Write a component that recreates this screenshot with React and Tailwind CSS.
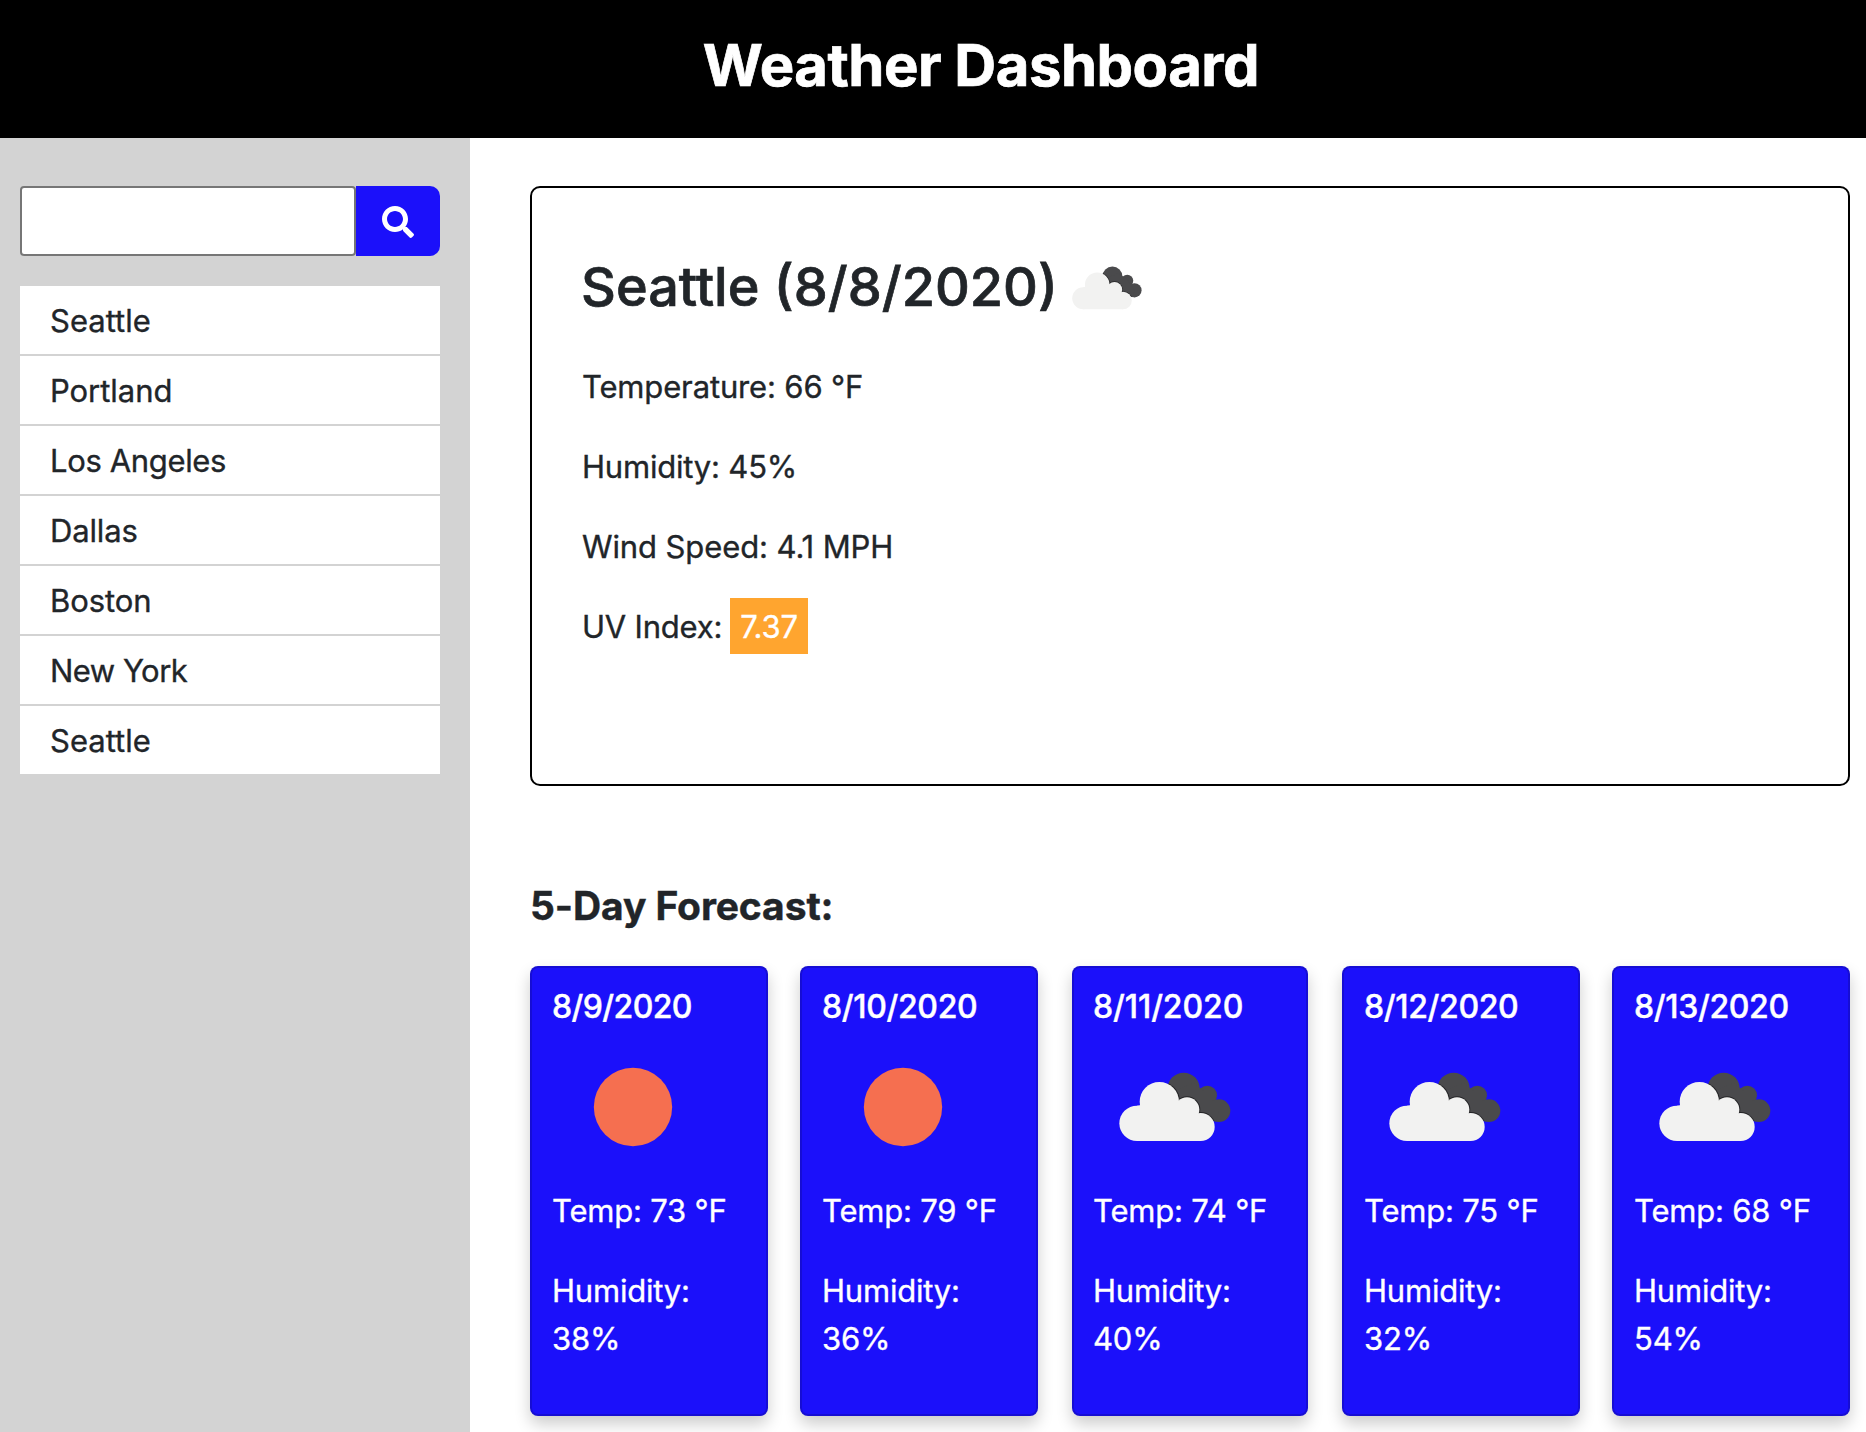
import { useId } from "react";
import { FaSearch } from "react-icons/fa";

const cities = [
  { name: "Seattle", tracking: "tracking-[0px]" },
  { name: "Portland", tracking: "tracking-[-0.05px]" },
  { name: "Los Angeles", tracking: "tracking-[-0.35px]" },
  { name: "Dallas", tracking: "tracking-[-0.15px]" },
  { name: "Boston", tracking: "tracking-[-0.1px]" },
  { name: "New York", tracking: "tracking-[-0.5px]" },
  { name: "Seattle", tracking: "tracking-[0px]" },
];

const forecast = [
  { date: "8/9/2020", icon: "clear", temp: 73, humidity: 38, tracking: "tracking-[-0.6px]" },
  { date: "8/10/2020", icon: "clear", temp: 79, humidity: 36, tracking: "tracking-[-0.35px]" },
  { date: "8/11/2020", icon: "clouds", temp: 74, humidity: 40, tracking: "tracking-[-0.1px]" },
  { date: "8/12/2020", icon: "clouds", temp: 75, humidity: 32, tracking: "tracking-[-0.35px]" },
  { date: "8/13/2020", icon: "clouds", temp: 68, humidity: 54, tracking: "tracking-[-0.35px]" },
];

function Puffs() {
  return (
    <>
      <circle cx="81" cy="190" r="53" />
      <circle cx="148" cy="125" r="59" />
      <circle cx="231" cy="149" r="37" />
      <circle cx="272" cy="201" r="42" />
      <path d="M81 243V137L148 125L231 149L272 201V243Z" />
    </>
  );
}

function DarkPuffs() {
  return (
    <>
      <circle cx="221" cy="86" r="48" />
      <circle cx="292" cy="106" r="29" />
      <circle cx="327" cy="152" r="34" />
      <path d="M200 90L250 70L292 100L327 152L318 185L290 175L231 149Z" />
    </>
  );
}

function WeatherIcon({ name, className }) {
  const id = useId();
  return (
    <svg className={className} viewBox="-45 -99 480 480" aria-hidden="true">
      {name === "clear" ? (
        <circle cx="195" cy="141" r="117.5" fill="#f56f50" />
      ) : (
        <>
          <clipPath id={id}>
            <DarkPuffs />
          </clipPath>
          <g fill="#4a4a4c">
            <DarkPuffs />
          </g>
          <g clipPath={`url(#${id})`} fill="#252527" stroke="#252527" strokeWidth="6">
            <Puffs />
          </g>
          <g fill="#f2f2f1">
            <Puffs />
          </g>
        </>
      )}
    </svg>
  );
}

function ForecastCard({ day, narrow }) {
  return (
    <article
      className={`${narrow ? "w-[236px] pl-[19px]" : "w-[238px] pl-5"} h-[450px] rounded-lg border-2 border-black/15 bg-[#1b10fa] bg-origin-border text-white shadow-[0_8px_16px_rgba(0,0,0,0.2)]`}
    >
      <h5 className={`mt-[19px] h-10 text-[32px] font-medium leading-[40px] [-webkit-text-stroke:0.4px] ${day.tracking}`}>
        {day.date}
      </h5>
      <WeatherIcon name={day.icon} className={narrow ? "ml-0.5 size-40" : "ml-px size-40"} />
      <p className="h-12 leading-[48px]">Temp: {day.temp} °F</p>
      <p className="mt-8 leading-[48px]">
        Humidity:
        <br />
        {day.humidity}%
      </p>
    </article>
  );
}

export default function App() {
  return (
    <div className="flex h-[1432px] w-[1866px] flex-col overflow-hidden bg-white font-['Inter',sans-serif] text-[31px] tracking-[-0.2px] text-[#212529] [-webkit-text-stroke:0.35px]">
      <header className="flex h-[138px] shrink-0 justify-center bg-black pl-24">
        <h1 className="mt-[29px] h-[72px] whitespace-nowrap text-[58px] font-bold leading-[72px] tracking-[-0.5px] text-white [-webkit-text-stroke:0.7px]">
          Weather Dashboard
        </h1>
      </header>
      <div className="flex min-h-0 flex-1">
        <aside className="w-[470px] shrink-0 bg-[#d3d3d3] pl-5 pr-[30px] pt-12">
          <form className="flex h-[70px]">
            <input
              type="text"
              aria-label="City"
              className="w-[336px] rounded-[4px] border-2 border-[#767676] bg-white px-3 outline-none"
            />
            <button
              type="button"
              aria-label="Search"
              className="flex w-[84px] items-center justify-center rounded-r-[10px] bg-[#1b10fa] pt-0.5 text-white"
            >
              <FaSearch size={32} />
            </button>
          </form>
          <ul className="mt-[30px] flex flex-col gap-0.5">
            {cities.map((city, i) => (
              <li key={i} className={`h-[68px] bg-white pl-[30px] leading-[70px] ${city.tracking}`}>
                {city.name}
              </li>
            ))}
          </ul>
        </aside>
        <main className="pl-[60px] pt-12">
          <section className="h-[600px] w-[1320px] rounded-[10px] border-2 border-black pl-[50px] pt-[63px]">
            <div className="flex h-[72px] items-center">
              <h3 className="-ml-px w-[476px] whitespace-nowrap text-[54px] font-medium leading-[72px] tracking-[0px] [-webkit-text-stroke:0.7px]">
                Seattle (8/8/2020)
              </h3>
              <WeatherIcon name="clouds" className="mt-0.5 size-[100px]" />
            </div>
            <p className="mt-10 leading-[48px] tracking-[-0.15px]">Temperature: 66 °F</p>
            <p className="mt-8 leading-[48px]">Humidity: 45%</p>
            <p className="mt-8 leading-[48px] tracking-[-0.1px]">Wind Speed: 4.1 MPH</p>
            <p className="mt-8 flex h-12 items-center leading-[48px]">
              <span className="w-[148px]">UV Index:</span>
              <span className="-mt-0.5 flex h-14 w-[78px] items-center justify-center bg-[#ffa52f] pt-0.5 text-white">
                7.37
              </span>
            </p>
          </section>
          <h2 className="mt-[96px] h-12 text-[39px] font-bold leading-[48px] tracking-[-0.1px] [-webkit-text-stroke:0.4px]">
            5-Day Forecast:
          </h2>
          <div className="mt-9 grid grid-cols-[270px_272px_270px_270px_238px]">
            {forecast.map((day, i) => (
              <ForecastCard key={day.date} day={day} narrow={i === 2} />
            ))}
          </div>
        </main>
      </div>
    </div>
  );
}
